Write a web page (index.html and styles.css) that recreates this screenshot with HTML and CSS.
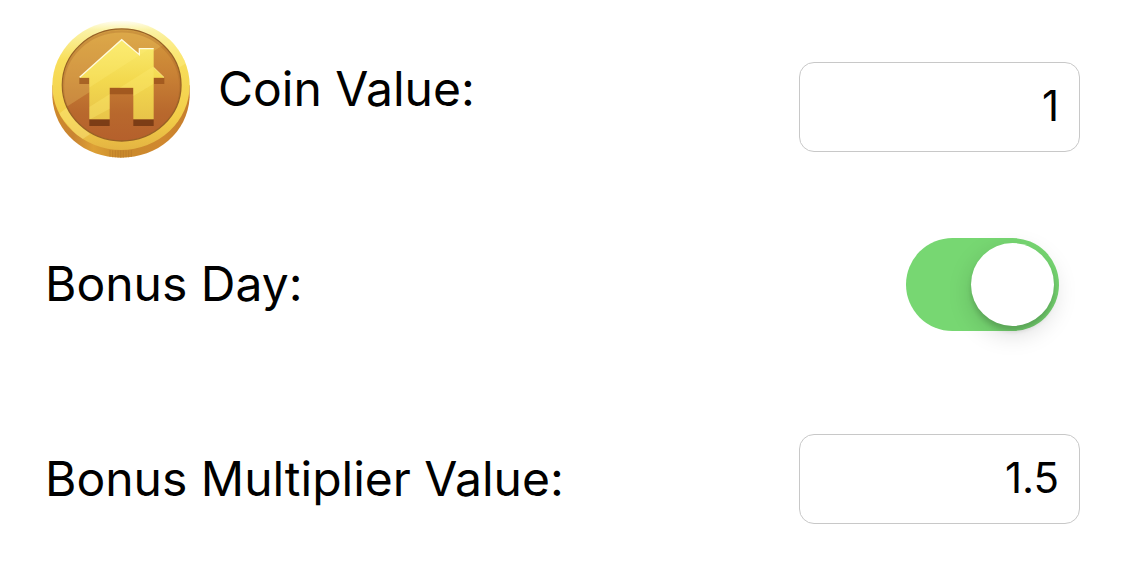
FILE: index.html
```html
<!DOCTYPE html>
<html lang="en">
<head>
<meta charset="utf-8">
<meta name="viewport" content="width=device-width, initial-scale=1">
<title>Coin Value</title>
<link rel="stylesheet" href="styles.css">
</head>
<body>
<form class="settings">
  <div class="row">
    <div class="caption">
      <svg class="coin" viewBox="36 30 414 414" aria-hidden="true">
        <defs>
          <linearGradient id="edge" x1="0" x2="1" y1="0" y2="0">
            <stop offset="0" stop-color="#cf8a2c"/><stop offset=".15" stop-color="#c98432"/>
            <stop offset=".3" stop-color="#dda035"/><stop offset=".5" stop-color="#c98a2c"/>
            <stop offset=".8" stop-color="#d0882f"/><stop offset="1" stop-color="#c67d2c"/>
          </linearGradient>
          <linearGradient id="rim" x1="0" x2="0" y1="0" y2="1">
            <stop offset="0" stop-color="#fffef4"/><stop offset=".07" stop-color="#fbf3a8"/>
            <stop offset=".3" stop-color="#f8df5c"/><stop offset=".75" stop-color="#f2cd48"/>
            <stop offset="1" stop-color="#e4b442"/>
          </linearGradient>
          <linearGradient id="face" x1="0" x2="0" y1="0" y2="1">
            <stop offset="0" stop-color="#d69a3c"/><stop offset=".4" stop-color="#c98235"/>
            <stop offset=".75" stop-color="#b8682d"/><stop offset="1" stop-color="#b5602c"/>
          </linearGradient>
          <linearGradient id="house" x1="0" x2="0" y1="0" y2="1">
            <stop offset="0" stop-color="#faec70"/><stop offset=".5" stop-color="#f3d94f"/>
            <stop offset="1" stop-color="#e8c449"/>
          </linearGradient>
          <clipPath id="face-clip"><ellipse cx="245" cy="225" rx="177" ry="167"/></clipPath>
          <clipPath id="rim-clip"><ellipse cx="243" cy="226" rx="206" ry="194"/></clipPath>
          <clipPath id="house-clip"><path d="M245 88 298 134V115H341V172L373 203H341V328H280V233H209V328H148V203H118Z"/></clipPath>
        </defs>
        <path d="M37 226V262C43 369 134 443 243 443S443 369 449 262V226Z" fill="url(#edge)"/>
        <path d="M210 420V441M218 421V442M226 421V442M234 421V443M242 421V443M250 421V443M258 421V442M266 421V442M274 420V441" stroke="#b97829" stroke-width="2"/>
        <ellipse cx="243" cy="226" rx="206" ry="194" fill="url(#rim)"/>
        <g clip-path="url(#rim-clip)">
          <path d="M365 105 395 85 450 134V153L416 173Z" fill="#fff08b" opacity=".4"/>
          <path d="M56 312 82 292 150 373 122 391Z" fill="#ffee8c" opacity=".35"/>
          <path d="M79 389 102 373 121 391 96 407Z" fill="#ffee8c" opacity=".25"/>
        </g>
        <ellipse cx="245" cy="225" rx="178" ry="168" fill="url(#face)" stroke="#986126" stroke-width="4"/>
        <g clip-path="url(#face-clip)">
          <path d="M65 300 385 95 330 40H60Z" fill="#f1d36a" opacity=".27"/>
          <ellipse cx="245" cy="230" rx="176" ry="166" fill="none" stroke="#a76528" stroke-width="7" opacity=".3"/>
        </g>
        <path d="M118 203H148V222H118ZM341 203H373V222H341ZM209 233H280V253H209Z" fill="#924a16" opacity=".65"/>
        <path d="M148 328H209V348H148ZM280 328H341V348H280Z" fill="#7c3d16"/>
        <path d="M245 88 298 134V115H341V172L373 203H341V328H280V233H209V328H148V203H118Z" fill="url(#house)"/>
        <g clip-path="url(#house-clip)">
          <path d="M110 80H385L110 257Z" fill="#fff17d" opacity=".25"/>
          <path d="M148 291 341 169V221L280 258 148 329Z" fill="#fff078" opacity=".3"/>
        </g>
        <path d="M119 202 245 89 298 134V116H341" fill="none" stroke="#fffbdc" stroke-width="4"/>
        <path d="M341 172 372 202" stroke="#fff5a0" stroke-width="2"/>
      </svg>
      <label class="label" for="coin-value">Coin Value:</label>
    </div>
    <input class="field field-low" id="coin-value" type="text" inputmode="decimal" value="1">
  </div>
  <div class="row">
    <label class="label" for="bonus-day">Bonus Day:</label>
    <input class="switch" id="bonus-day" type="checkbox" role="switch" checked>
  </div>
  <div class="row">
    <label class="label" for="multiplier">Bonus Multiplier Value:</label>
    <input class="field" id="multiplier" type="text" inputmode="decimal" value="1.5">
  </div>
</form>
</body>
</html>
```
FILE: styles.css
```css
*,
*::before {
  box-sizing: border-box;
}

body {
  margin: 0;
  background: #fff;
  color: #000;
  font-family: Inter, "Liberation Sans", sans-serif;
}

.settings {
  display: grid;
  grid-auto-rows: minmax(138px, auto);
  row-gap: 57px;
  padding: 20px 45px 16px;
}

.row {
  display: flex;
  align-items: center;
  justify-content: space-between;
  gap: 24px;
}

.caption {
  display: flex;
  align-items: center;
  gap: 28px;
  padding-left: 7px;
}

.coin {
  flex: none;
  width: 138px;
  height: 138px;
}

.label {
  font-size: 48px;
  line-height: 60px;
}

.field {
  flex: 0 1 281px;
  min-width: 120px;
  height: 90px;
  padding: 0 20px 4px;
  border: 1px solid #c8c8c8;
  border-radius: 15px;
  background: #fff;
  color: inherit;
  font-family: inherit;
  font-size: 42px;
  text-align: right;
}

.field-low {
  margin-top: 36px;
}

.switch {
  appearance: none;
  flex: none;
  display: flex;
  align-items: center;
  width: 153px;
  height: 93px;
  margin: 0 21px 0 0;
  padding: 5px;
  border-radius: 47px;
  background: #77d772;
}

.switch::before {
  content: "";
  width: 83px;
  height: 83px;
  border-radius: 50%;
  background: #fff;
  box-shadow: 0 8px 24px rgba(0, 0, 0, 0.15), 0 5px 5px rgba(0, 0, 0, 0.14);
}

.switch:checked {
  justify-content: flex-end;
}

.switch:not(:checked) {
  background: #e5e5ea;
}
```
